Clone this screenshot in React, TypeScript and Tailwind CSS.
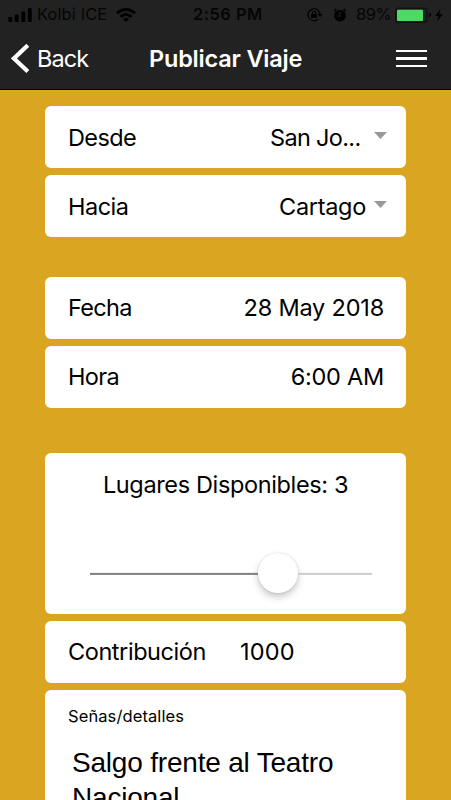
import type { ReactNode } from "react";

function StatusBar() {
  return (
    <div className="flex h-[29px] items-center pl-2 text-[16.5px] leading-[29px] text-[#050505]">
      <svg width="24" height="14" viewBox="0 0 24 14" className="shrink-0">
        <rect x="0.3" y="9" width="4" height="5" rx="1" />
        <rect x="6.8" y="6.5" width="4" height="7.5" rx="1" />
        <rect x="13.3" y="3.5" width="4" height="10.5" rx="1" />
        <rect x="19.8" y="0" width="4" height="14" rx="1" />
      </svg>
      <span className="ml-[5px] w-[79px] whitespace-nowrap font-normal tracking-[0.1px]">Kolbi ICE</span>
      <svg width="20" height="14" viewBox="0 0 20 14" className="shrink-0">
        <path d="M0 4.2Q10-4 20 4.2L17.9 6.3Q10-.3 2.1 6.3Z" />
        <path d="M3.5 7.8Q10 2.4 16.5 7.8L14.4 9.9Q10 6.1 5.6 9.9Z" />
        <path d="M6.9 11.2Q10 8.6 13.1 11.2L10 14Z" />
      </svg>
      <span className="ml-[57px] w-[72px] whitespace-nowrap font-semibold tracking-[0.45px]">2:56 PM</span>
      <svg width="16" height="14" viewBox="0 0 16 14" className="ml-[42px] shrink-0">
        <path d="M11.3 11A6 6 0 1 1 13 6.3" fill="none" stroke="#000" strokeWidth="1.2" />
        <path d="M10.6 6H15.6L13.1 9Z" />
        <rect x="4.1" y="6" width="5.8" height="4" rx=".5" />
        <path d="M5.4 6V4.8a1.6 1.6 0 0 1 3.2 0V6" fill="none" stroke="#000" strokeWidth="1.1" />
      </svg>
      <svg width="14" height="14" viewBox="0 0 14 14" className="ml-[10px] shrink-0">
        <circle cx="7" cy="7.6" r="5.9" />
        <path d="M.8 3.3 3.3 1M13.2 3.3 10.7 1" stroke="#000" strokeWidth="1.4" />
        <path d="M7 4V8H4.3" fill="none" stroke="#222" strokeWidth="1.1" />
      </svg>
      <span className="ml-[9px] w-[38px] whitespace-nowrap font-normal tracking-[-0.5px]">89%</span>
      <svg width="50" height="16" viewBox="0 0 50 16" className="shrink-0">
        <rect x="1.8" y="1.2" width="31" height="14" rx="2.5" fill="none" stroke="#111" strokeWidth="1.4" />
        <rect x="3" y="2.7" width="26" height="11.2" rx="1" fill="#4cd964" />
        <path d="M35.3 5.3Q39 8 35.3 10.7Z" />
        <path d="M46.7 1.8 41.2 9H44.7l-1.7 5.4 5.8-7.2h-3.6Z" />
      </svg>
    </div>
  );
}

function Header() {
  return (
    <header className="h-[90px] border-b border-black bg-[#222222]">
      <StatusBar />
      <div className="flex h-[60px] items-center pl-[11px] text-[23.5px] text-white">
        <svg width="19" height="30" viewBox="0 0 19 30" className="shrink-0">
          <path d="M16.8 1.3 3 14.4 16.8 27.5" fill="none" stroke="#fff" strokeWidth="4.2" />
        </svg>
        <span className="ml-[7px] w-[112px] font-normal tracking-[-0.95px]">Back</span>
        <h1 className="w-[247px] whitespace-nowrap font-semibold tracking-[-0.2px]">Publicar Viaje</h1>
        <div className="mb-px flex w-[31px] flex-col gap-[5px]">
          <span className="h-[2.4px] bg-white" />
          <span className="h-[2.4px] bg-white" />
          <span className="h-[2.4px] bg-white" />
        </div>
      </div>
    </header>
  );
}

function Row({ label, children }: { label: ReactNode; children: ReactNode }) {
  return (
    <div className="flex h-[62.3px] items-center justify-between rounded-md bg-white pr-[22px] pl-[23px]">
      {label}
      {children}
    </div>
  );
}

function Caret() {
  return (
    <svg width="13" height="7" viewBox="0 0 13 7" className="-mr-[3px] mb-[4px] shrink-0">
      <path d="M0 0H13L6.5 7Z" fill="#999" />
    </svg>
  );
}

export default function App() {
  return (
    <div className="h-[800px] w-[451px] overflow-hidden bg-[#daa520] font-['Inter',sans-serif] text-black">
      <Header />
      <main className="px-[45px] pt-4 text-[23.5px] font-normal whitespace-nowrap">
        <section className="flex flex-col gap-[6.8px]">
          <Row label={<span className="tracking-[-0.6px]">Desde</span>}>
            <span className="mr-[13.5px] ml-auto tracking-[-0.68px]">San Jo...</span>
            <Caret />
          </Row>
          <Row label={<span className="tracking-[-0.5px]">Hacia</span>}>
            <span className="mr-[8px] ml-auto tracking-[-0.3px]">Cartago</span>
            <Caret />
          </Row>
        </section>
        <section className="mt-[39.3px] flex flex-col gap-[6.8px]">
          <Row label={<span className="tracking-[-0.65px]">Fecha</span>}>
            <span className="tracking-[-0.2px]">28 May 2018</span>
          </Row>
          <Row label={<span className="tracking-[-0.65px]">Hora</span>}>
            <span className="tracking-[-0.25px]">6:00 AM</span>
          </Row>
        </section>
        <section className="mt-[45.2px] flex flex-col gap-[6.8px]">
          <div className="h-[160.5px] rounded-md bg-white pt-4">
            <p className="text-center leading-8 tracking-[-0.36px]">Lugares Disponibles: 3</p>
            <div className="mt-[52px] flex h-10 items-center pr-[34px] pl-[45px]">
              <div className="h-[1.7px] w-[168px] translate-y-[0.9px] bg-[#808080]" />
              <div className="size-10 rounded-full bg-white shadow-[0_4px_7px_rgba(0,0,0,0.22),0_0_2px_rgba(0,0,0,0.14)]" />
              <div className="h-[1.7px] flex-1 translate-y-[0.9px] bg-[#cccccc]" />
            </div>
          </div>
          <div className="flex h-[62.3px] items-center rounded-md bg-white pl-[23px]">
            <span className="w-[172px] tracking-[-0.43px]">Contribución</span>
            <span className="tracking-[0.2px]">1000</span>
          </div>
          <div className="h-[180px] rounded-md bg-white pt-[15.5px] pl-[23px]">
            <p className="text-[16.5px] leading-[22px] tracking-[0.1px]">Señas/detalles</p>
            <p className="mt-[17.5px] ml-1 w-[300px] font-['Liberation_Sans',Arial,sans-serif] text-[28px] leading-[35px] font-normal tracking-[-0.2px] whitespace-normal">
              Salgo frente al Teatro Nacional
            </p>
          </div>
        </section>
      </main>
    </div>
  );
}
